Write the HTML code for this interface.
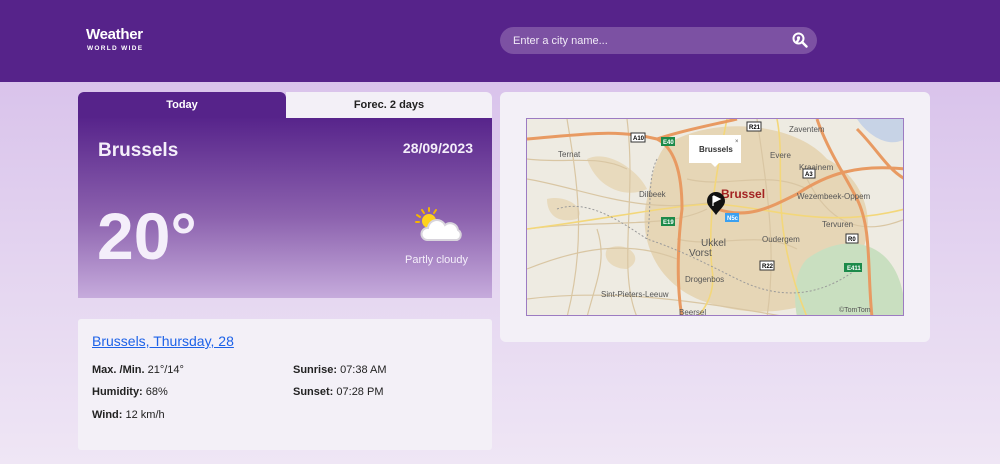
<!DOCTYPE html>
<html><head><meta charset="utf-8"><style>
*{margin:0;padding:0;box-sizing:border-box}
body{width:1000px;height:464px;overflow:hidden;font-family:"Liberation Sans",sans-serif;background:linear-gradient(#d9c3eb 80px,#e6d8f1 300px,#efe6f5 464px);position:relative}
.hdr{position:absolute;left:0;top:0;width:1000px;height:82px;background:#56238a}
.logo{position:absolute;left:86px;top:26px;color:#fff;font-weight:bold;font-size:15px;letter-spacing:-0.3px}
.logo small{display:block;font-size:6.5px;letter-spacing:1.3px;margin-top:2px;margin-left:1px}
.search{position:absolute;left:500px;top:27px;width:317px;height:27px;border-radius:14px;background:#7c51a3;color:#f1eaf7;font-size:11px;padding:8px 0 0 13px}
.search svg{position:absolute;right:9px;top:5px}
.tabs{position:absolute;left:78px;top:92px;width:414px;height:27px}
.t1{position:absolute;left:0;top:0;width:208px;height:27px;background:#56238a;color:#fff;font-weight:bold;font-size:11px;text-align:center;line-height:27px;border-radius:6px 6px 0 0}
.t2{position:absolute;left:208px;top:0;width:206px;height:26px;background:#f3f0f7;color:#222;font-weight:bold;font-size:11px;text-align:center;line-height:26px;border-radius:0 6px 0 0}
.panel{position:absolute;left:78px;top:118px;width:414px;height:180px;background:linear-gradient(#57248b,#8c62ae 55%,#c6abdc);color:#f4eefa}
.city{position:absolute;left:20px;top:22px;font-size:19px;font-weight:bold}
.date{position:absolute;right:19px;top:22px;font-size:14px;font-weight:bold}
.temp{position:absolute;left:19px;top:80px;font-size:66px;font-weight:bold}
.pc{position:absolute;right:24px;top:136px;font-size:11px}
.det{position:absolute;left:78px;top:319px;width:414px;height:131px;background:#f3f0f7;border-radius:3px;color:#222;font-size:11px}
.det a{position:absolute;left:14px;top:14px;color:#1d62e8;font-size:14px;text-decoration:underline}
.det p{position:absolute}
.det b{font-weight:bold}
.mapc{position:absolute;left:500px;top:92px;width:430px;height:250px;background:#f3f0f7;border-radius:6px}
.map{position:absolute;left:26px;top:26px;width:378px;height:198px;border:1px solid #9c7bc2;overflow:hidden;background:#eeebe2}
</style></head><body>
<div class="hdr">
<div class="logo">Weather<small>WORLD WIDE</small></div>
<div class="search">Enter a city name...
<svg width="16" height="17" viewBox="0 0 16 17"><circle cx="6.5" cy="6.5" r="5" fill="none" stroke="#fff" stroke-width="2"/><circle cx="6.5" cy="5.8" r="1.6" fill="#fff"/><path d="M6.5 7.5 L5.2 9.5 M10 10 L14.5 14.5" stroke="#fff" stroke-width="2.4" stroke-linecap="round"/></svg></div>
</div>
<div class="tabs"><div class="t1">Today</div><div class="t2">Forec. 2 days</div></div>
<div class="panel">
<div class="city">Brussels</div><div class="date">28/09/2023</div>
<div class="temp">20°</div>
<svg style="position:absolute;left:334px;top:88px" width="52" height="40" viewBox="0 0 52 40">
<g stroke="#f5b400" stroke-width="2" stroke-linecap="round"><path d="M17 2v3M10 4l2 3M24 4l-2 3M5 9l3 2M4 16h3"/></g>
<circle cx="17" cy="15" r="7" fill="#ffd21c"/>
<path d="M15 34a6 6 0 0 1 1-12a9 9 0 0 1 17-3a8 8 0 0 1 13 5a5.5 5.5 0 0 1 -1 10z" fill="#fff" stroke="#d8d4dc" stroke-width="2"/></svg>
<div class="pc">Partly cloudy</div>
</div>
<div class="det">
<a>Brussels, Thursday, 28</a>
<p style="left:14px;top:45px"><b>Max. /Min.</b> 21°/14°</p>
<p style="left:14px;top:67px"><b>Humidity:</b> 68%</p>
<p style="left:14px;top:90px"><b>Wind:</b> 12 km/h</p>
<p style="left:215px;top:45px"><b>Sunrise:</b> 07:38 AM</p>
<p style="left:215px;top:67px"><b>Sunset:</b> 07:28 PM</p>
</div>
<div class="mapc"><div class="map">
<svg width="378" height="198" viewBox="0 0 378 198" style="position:absolute;left:0;top:0">
<path d="M140 25 C190 -5 270 5 300 40 C340 60 355 110 325 150 C300 195 230 200 185 185 C130 170 110 120 120 80 C125 55 130 35 140 25z" fill="#e6d6b6"/>
<path d="M60 40 C80 30 110 50 120 70 C100 80 70 70 60 40z M20 80 C40 75 60 90 50 100 C30 105 20 95 20 80z M80 130 C100 120 120 140 100 150 C85 150 75 140 80 130z" fill="#e8dabd"/>
<path d="M280 140 C320 110 378 120 378 198 L270 198 C265 170 270 150 280 140z" fill="#c9dfc0"/>
<path d="M330 0 L378 0 L378 20 C360 30 340 15 330 0z" fill="#c7d3e6"/>
<g fill="none" stroke="#d9c6a3" stroke-width="1.2">
<path d="M0 60 C60 70 120 100 200 80 M0 150 C50 130 100 120 150 140 M40 0 C50 60 60 120 40 198 M100 0 C110 80 90 150 110 198 M0 110 C80 100 140 110 180 90 M230 0 C240 70 250 130 240 198 M280 60 C300 100 330 120 378 100 M0 180 C80 170 160 180 260 198 M0 40 C40 45 70 35 100 50 M60 198 C70 160 80 140 70 110 M160 60 C200 70 240 50 280 70 M150 120 C190 130 230 110 270 130"/></g>
<g fill="none" stroke="#f3d77a" stroke-width="1.6">
<path d="M0 110 C80 100 150 85 190 85 C250 90 300 110 378 90 M200 0 C190 50 180 100 185 150 C190 180 170 198 170 198 M250 0 C260 50 240 100 280 198"/></g>
<g fill="none" stroke="#e89a62" stroke-width="3">
<path d="M0 20 C60 15 90 10 130 20 C150 30 155 60 155 90 C150 130 150 170 155 198 M130 20 C160 10 190 5 210 0 M378 50 C330 45 300 55 270 75 C240 90 220 100 190 90 M290 0 C300 30 320 60 330 80 C345 110 340 150 345 198 M330 10 C350 30 360 50 378 60"/></g>
<g fill="none" stroke="#9a9a9a" stroke-width="1" stroke-dasharray="2 2"><path d="M30 90 C60 80 90 100 120 120 C150 130 170 140 210 160 C250 180 290 180 330 150 M130 40 C120 60 125 90 120 120"/></g>
<g font-family="Liberation Sans,sans-serif" font-size="8" fill="#555">
<text x="31" y="38">Ternat</text><text x="112" y="78">Dilbeek</text><text x="243" y="39">Evere</text><text x="272" y="51">Kraainem</text><text x="262" y="13">Zaventem</text><text x="270" y="80">Wezembeek-Oppem</text><text x="295" y="108">Tervuren</text><text x="235" y="123">Oudergem</text><text x="174" y="127" font-size="10">Ukkel</text><text x="162" y="137" font-size="10">Vorst</text><text x="158" y="163">Drogenbos</text><text x="74" y="178">Sint-Pieters-Leeuw</text><text x="152" y="196">Beersel</text><text x="312" y="193" font-size="7">©TomTom</text></g>
<text x="194" y="79" font-family="Liberation Sans,sans-serif" font-size="12" font-weight="bold" fill="#a32222">Brussel</text>
<g font-family="Liberation Sans,sans-serif" font-size="6" font-weight="bold">
<rect x="104" y="14" width="14" height="9" fill="#fff" stroke="#333"/><text x="106" y="21">A10</text>
<rect x="134" y="18" width="14" height="9" fill="#1c8a4a"/><text x="136" y="25" fill="#fff">E40</text>
<rect x="220" y="3" width="14" height="9" fill="#fff" stroke="#333"/><text x="222" y="10">R21</text>
<rect x="276" y="50" width="12" height="9" fill="#fff" stroke="#333"/><text x="278" y="57">A3</text>
<rect x="134" y="98" width="14" height="9" fill="#1c8a4a"/><text x="136" y="105" fill="#fff">E19</text>
<rect x="198" y="94" width="14" height="9" fill="#3aa0f0"/><text x="200" y="101" fill="#fff">N5c</text>
<rect x="233" y="142" width="14" height="9" fill="#fff" stroke="#333"/><text x="235" y="149">R22</text>
<rect x="319" y="115" width="12" height="9" fill="#fff" stroke="#333"/><text x="321" y="122">R0</text>
<rect x="317" y="144" width="18" height="9" fill="#1c8a4a"/><text x="320" y="151" fill="#fff">E411</text></g>
<path d="M189 73 a9 9 0 0 1 9 9 c0 5 -5 8 -9 14 c-4 -6 -9 -9 -9 -14 a9 9 0 0 1 9 -9z" fill="#111"/>
<path d="M186 77 v10 M187 77 l6 3 l-6 3z" stroke="#fff" fill="#fff" stroke-width="1.2"/>
<rect x="162" y="16" width="52" height="28" fill="#fff"/><path d="M184 44 l4 4 l4 -4z" fill="#fff"/>
<text x="172" y="33" font-family="Liberation Sans,sans-serif" font-size="8" font-weight="bold" fill="#333">Brussels</text>
<text x="208" y="24" font-family="Liberation Sans,sans-serif" font-size="6" fill="#555">×</text>
</svg></div></div>
</body></html>
